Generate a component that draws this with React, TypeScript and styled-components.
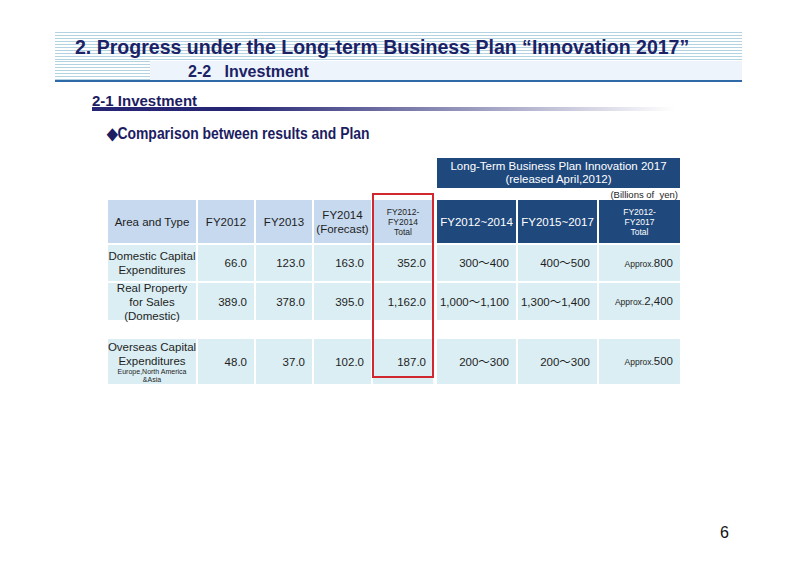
import React from "react";
import styled, { createGlobalStyle } from "styled-components";

const Global = createGlobalStyle`
  html, body { margin: 0; padding: 0; background: #ffffff; }
  body { font-family: "Liberation Sans", Arial, sans-serif; }
`;

const Page = styled.div`
  position: relative;
  width: 800px;
  height: 566px;
  box-sizing: border-box;
  padding: 32px 0 0 55px;
  display: flex;
  flex-direction: column;
  overflow: hidden;
`;

const narrow = `"Liberation Sans Narrow", "Arial Narrow", "Liberation Sans", Arial, sans-serif`;

const stripes = `repeating-linear-gradient(to bottom, #b4d3e2 0px, #b4d3e2 1px, #ffffff 1px, #ffffff 3px)`;

const Header = styled.div`
  width: 687px;
  display: flex;
  flex-direction: column;
`;

const TitleRow = styled.div`
  height: 29px;
  background: ${stripes};
  padding-left: 20px;
  font-family: ${narrow};
  font-weight: bold;
  font-size: 21px;
  line-height: 29px;
  color: #1b2266;
  white-space: nowrap;
`;

const Condensed = styled.span<{ $scale: number }>`
  display: inline-block;
  transform: scaleX(${(p) => p.$scale});
  transform-origin: left center;
`;

const SubRow = styled.div`
  display: flex;
  height: 19px;
`;

const StripeCell = styled.div`
  width: 95px;
  background: ${stripes};
`;

const PaleCell = styled.div`
  flex: 1;
  background: #eef4fb;
  padding-left: 38px;
  font-family: ${narrow};
  font-weight: bold;
  font-size: 16px;
  line-height: 21px;
  color: #1b2266;
  white-space: pre;
`;

const BlueLine = styled.div`
  height: 2px;
  background: #2f6aa8;
`;

const Section = styled.div`
  margin: 12px 0 0 37px;
  display: flex;
  flex-direction: column;
`;

const SectionText = styled.div`
  font-family: ${narrow};
  font-weight: bold;
  font-size: 15px;
  line-height: 14px;
  color: #1c1c62;
`;

const SectionBar = styled.div`
  width: 583px;
  height: 4px;
  margin-top: -1px;
  background: linear-gradient(to right, #262675 0%, #262675 25%, rgba(38, 38, 117, 0) 100%);
`;

const SubHeading = styled.div`
  margin: 13px 0 0 52px;
  font-family: "Liberation Sans", Arial, sans-serif;
  font-weight: bold;
  font-size: 16px;
  line-height: 20px;
  color: #1c1c62;
  white-space: nowrap;
`;

const TableWrap = styled.div`
  position: relative;
  margin: 14px 0 0 53px;
  width: 572px;
  display: flex;
  flex-direction: column;
  font-family: "Liberation Sans", Arial, "Noto Sans CJK JP", sans-serif;
  color: #1e1e1e;
`;

const PlanCaption = styled.div`
  align-self: flex-end;
  width: 243px;
  height: 30px;
  background: #1f497d;
  color: #ffffff;
  font-size: 11.5px;
  line-height: 13px;
  text-align: center;
  display: flex;
  flex-direction: column;
  justify-content: center;
`;

const Units = styled.div`
  align-self: flex-end;
  height: 12px;
  padding-right: 2px;
  font-size: 9.5px;
  line-height: 14px;
  white-space: pre;
`;

const Grid = styled.div`
  display: grid;
  grid-template-columns: 88px 56px 56px 57px 60px 81px 79px 81px;
  grid-template-rows: 43px 36px 37px 15px 45px;
  column-gap: 2px;
  row-gap: 2px;
`;

type CellProps = { $kind: "head" | "plan" | "body"; $align?: "center" | "right"; $shift?: boolean };

const Cell = styled.div<CellProps>`
  background: ${(p) => (p.$kind === "head" ? "#c6d9ee" : p.$kind === "plan" ? "#1f497d" : "#dbeef3")};
  color: ${(p) => (p.$kind === "plan" ? "#ffffff" : "#1e1e1e")};
  margin-left: ${(p) => (p.$shift ? "2px" : "0")};
  display: flex;
  flex-direction: column;
  justify-content: center;
  align-items: ${(p) => (p.$align === "right" ? "flex-end" : "center")};
  text-align: ${(p) => (p.$align === "right" ? "right" : "center")};
  padding-right: ${(p) => (p.$align === "right" ? "7px" : "0")};
  font-size: 11.5px;
  line-height: 14px;
  white-space: nowrap;
`;

const Small = styled.span`
  font-size: 8.5px;
  line-height: 10px;
`;

const Tiny = styled.span`
  font-size: 7px;
  line-height: 8px;
`;

const Approx = styled.span`
  font-size: 8.5px;
`;

const BlankRow = styled.div`
  grid-column: 1 / -1;
`;

const Highlight = styled.div`
  position: absolute;
  left: 264px;
  top: 35px;
  width: 62px;
  height: 185px;
  box-sizing: border-box;
  border: 2px solid #d0282e;
  pointer-events: none;
`;

const Footer = styled.div`
  margin-top: auto;
  width: 674px;
  height: 42px;
  display: flex;
  justify-content: flex-end;
  font-family: "Liberation Sans", Arial, sans-serif;
  font-size: 16px;
  color: #111;
`;

type Row = {
  label: React.ReactNode;
  vals: string[];
  plan: [string, string, string];
};

const rows: Row[] = [
  {
    label: (
      <>
        Domestic Capital
        <br />
        Expenditures
      </>
    ),
    vals: ["66.0", "123.0", "163.0", "352.0"],
    plan: ["300～400", "400～500", "800"],
  },
  {
    label: (
      <>
        Real Property
        <br />
        for Sales
        <br />
        (Domestic)
      </>
    ),
    vals: ["389.0", "378.0", "395.0", "1,162.0"],
    plan: ["1,000～1,100", "1,300～1,400", "2,400"],
  },
];

const overseas: Row = {
  label: (
    <>
      Overseas Capital
      <br />
      Expenditures
      <br />
      <Tiny>Europe,North America</Tiny>
      <Tiny>&amp;Asia</Tiny>
    </>
  ),
  vals: ["48.0", "37.0", "102.0", "187.0"],
  plan: ["200～300", "200～300", "500"],
};

const BodyRow: React.FC<{ row: Row }> = ({ row }) => (
  <>
    <Cell $kind="body">{row.label}</Cell>
    {row.vals.map((v, i) => (
      <Cell key={i} $kind="body" $align="right">
        {v}
      </Cell>
    ))}
    <Cell $kind="body" $align="right" $shift>
      {row.plan[0]}
    </Cell>
    <Cell $kind="body" $align="right">
      {row.plan[1]}
    </Cell>
    <Cell $kind="body" $align="right">
      <span>
        <Approx>Approx.</Approx>
        {row.plan[2]}
      </span>
    </Cell>
  </>
);

export default function App() {
  return (
    <>
      <Global />
      <Page>
        <Header>
          <TitleRow>
            <Condensed $scale={0.93}>2. Progress under the Long-term Business Plan “Innovation 2017”</Condensed>
          </TitleRow>
          <SubRow>
            <StripeCell />
            <PaleCell>{"2-2   Investment"}</PaleCell>
          </SubRow>
          <BlueLine />
        </Header>

        <Section>
          <SectionText>2-1 Investment</SectionText>
          <SectionBar />
        </Section>

        <SubHeading>
          <Condensed $scale={0.87}>◆Comparison between results and Plan</Condensed>
        </SubHeading>

        <TableWrap>
          <PlanCaption>
            <span>Long-Term Business Plan Innovation 2017</span>
            <span>(released April,2012)</span>
          </PlanCaption>
          <Units>{"(Billions of  yen)"}</Units>
          <Grid>
            <Cell $kind="head">Area and Type</Cell>
            <Cell $kind="head">FY2012</Cell>
            <Cell $kind="head">FY2013</Cell>
            <Cell $kind="head">
              FY2014
              <br />
              (Forecast)
            </Cell>
            <Cell $kind="head">
              <Small>FY2012-</Small>
              <Small>FY2014</Small>
              <Small>Total</Small>
            </Cell>
            <Cell $kind="plan" $shift>
              FY2012~2014
            </Cell>
            <Cell $kind="plan">FY2015~2017</Cell>
            <Cell $kind="plan">
              <Small>FY2012-</Small>
              <Small>FY2017</Small>
              <Small>Total</Small>
            </Cell>
            {rows.map((r, i) => (
              <BodyRow key={i} row={r} />
            ))}
            <BlankRow />
            <BodyRow row={overseas} />
          </Grid>
          <Highlight />
        </TableWrap>

        <Footer>6</Footer>
      </Page>
    </>
  );
}
